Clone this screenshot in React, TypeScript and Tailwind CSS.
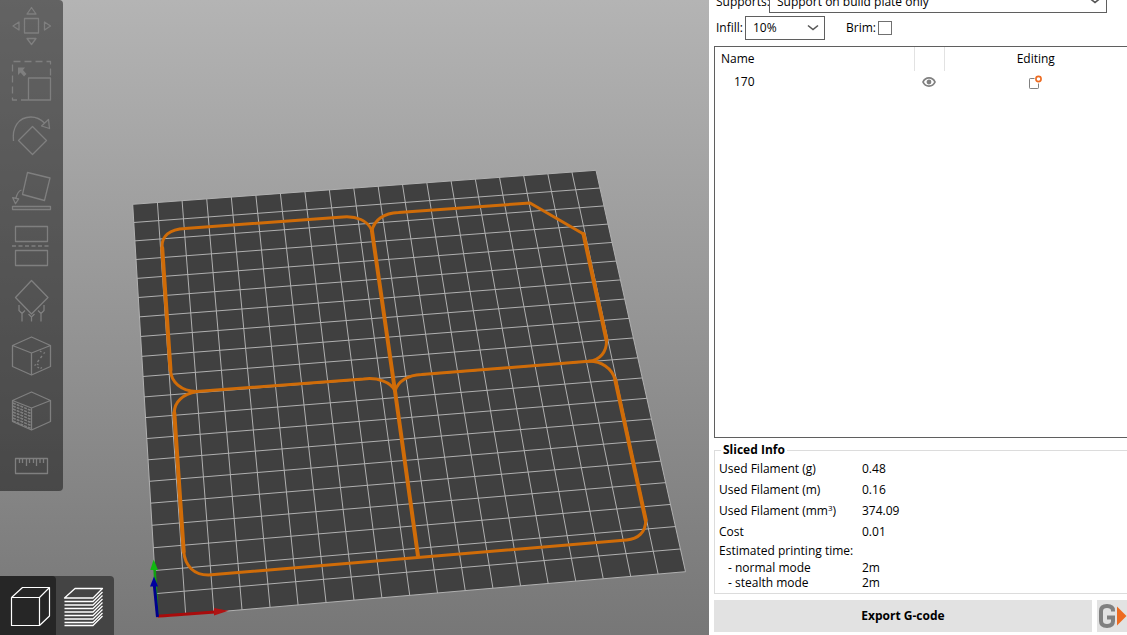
import React from 'react'

type Point = [number, number]

const COLUMNS = 19
const ROWS = 20

// bed corners: top left, top right, bottom right, bottom left
const BED: Point[] = [[132.7, 204.3], [596, 170.3], [685.5, 571.7], [157.5, 617]]

// perspective mapping of the unit square onto the bed
const project = (u: number, v: number): Point => {
  const [[x0, y0], [x1, y1], [x2, y2], [x3, y3]] = BED
  const dx3 = x0 - x1 + x2 - x3
  const dy3 = y0 - y1 + y2 - y3
  const det = (x1 - x2) * (y3 - y2) - (x3 - x2) * (y1 - y2)
  const g = (dx3 * (y3 - y2) - (x3 - x2) * dy3) / det
  const h = ((x1 - x2) * dy3 - dx3 * (y1 - y2)) / det
  const w = g * u + h * v + 1
  return [
    ((x1 - x0 + g * x1) * u + (x3 - x0 + h * x3) * v + x0) / w,
    ((y1 - y0 + g * y1) * u + (y3 - y0 + h * y3) * v + y0) / w,
  ]
}

const segment = (a: Point, b: Point) => `M${a[0]} ${a[1]}L${b[0]} ${b[1]}`

const gridPath = [
  ...Array.from({ length: COLUMNS + 1 }, (_, i) => segment(project(i / COLUMNS, 0), project(i / COLUMNS, 1))),
  ...Array.from({ length: ROWS + 1 }, (_, i) => segment(project(0, i / ROWS), project(1, i / ROWS))),
].join('')

const Scene = () => (
  <svg className="block h-full w-full" viewBox="0 0 709 635" preserveAspectRatio="xMinYMin meet" aria-label="Build plate">
    <polygon points={BED.map((p) => p.join(',')).join(' ')} fill="#404040" />
    <path d={gridPath} stroke="#b0b0b0" strokeWidth="1" fill="none" />

    {/* Printed outline */}
    <g fill="none" stroke="#d06c08" strokeLinecap="round" strokeLinejoin="round">
      <g strokeWidth="3">
        <path d="M162.2 248C161 236 170 229 185 228.5L343 217C356 216 368 220 372 231" />
        <path d="M372 231C374 220 384 213 398.5 212.5L530 203L583.5 234" />
        <path d="M170.5 370C171 382 181 391 196.5 391.5L363.5 379C377 377 391 382 395 391" />
        <path d="M395 391C398 381 408 375 421.5 374.5L588.5 361.3C600 360 607 352 606.5 340" />
        <path d="M196.5 391.5C183 394 174 402 174.3 413" />
        <path d="M588.5 361.3C601 361 612 368 615.3 380" />
        <path d="M183.7 551.7C185 566 194 575 208.3 575L626.7 540C638 539 646 532 645.7 520" />
      </g>
      <g strokeWidth="4">
        <path d="M162.2 248L170.5 370" />
        <path d="M372 231L395 391L418 556" />
        <path d="M583.5 234L606.5 340" />
        <path d="M174.3 413L183.7 551.7" />
        <path d="M615.3 380L645.7 520" />
      </g>
    </g>

    {/* Axes */}
    <path d="M157.5 616L154.5 568" stroke="#10a010" strokeWidth="2.5" />
    <path d="M153.7 559.5L150.3 570H158Z" fill="#10b810" />
    <path d="M157.5 616.2L215 612" stroke="#a80c0c" strokeWidth="3" />
    <path d="M214 608L228.500 610.8L214 615.5Z" fill="#b01414" />
    <path d="M157.5 617L154.3 585" stroke="#00008c" strokeWidth="3" />
    <path d="M154 576.500L150 586.5H158Z" fill="#0000a0" />
  </svg>
)

const CUBE = 'M31.5 7L50.5 15.5V36.5L31.5 45L12.5 36.5V15.5ZM12.5 15.5L31.5 23L50.5 15.5M31.5 23V45'

const tools = [
  {
    name: 'Move',
    icon: (
      <path d="M24.5 18.5h14v14.5h-14zM31.5 7.5L27 14h9zM31.5 44.5L27 38.5h9zM13 26l6-4v8zM50.5 26l-6-4v8z" />
    ),
  },
  {
    name: 'Scale',
    icon: (
      <>
        <path d="M28 45H12.5V6.5H50.5V23" strokeDasharray="7 4" />
        <path d="M28.5 23h22v22h-22z" />
        <path d="M18 12.5h7L23 15l3.5 4L24 21.5l-3.5-4L18 20z" fill="#7f7f7f" stroke="none" />
      </>
    ),
  },
  {
    name: 'Rotate',
    icon: (
      <path d="M32.5 16.5l14 14-14 14-14-14zM13.5 31C12 18 18 7 31 7C37 7 41 9.5 44.5 13M48.5 9.5l1 9-8-2.5z" />
    ),
  },
  {
    name: 'Place on face',
    icon: (
      <path d="M27.5 7.5L50 13L44.5 35.5L22.5 29.5zM12.5 41.5h38v3h-38zM21.5 25C18 26 17 29 16 33M12.7 32.7l6 1.3-3.2 4.7z" />
    ),
  },
  {
    name: 'Cut',
    icon: (
      <>
        <path d="M15.5 6.5h32v15h-32zM15.5 30.5h32v15h-32z" />
        <path d="M12 26H51" strokeDasharray="4 2.5" />
      </>
    ),
  },
  {
    name: 'Paint-on supports',
    icon: (
      <path d="M31.5 5.5L48 22.5L31.5 39L15.5 22.5zM19 30v5.5l3 3v8M22 38.5l3-3M28.5 39l3 3 3-3M31.5 42v4.5M44 30v5.5l-3 3v8M41 38.5l-3-3" />
    ),
  },
  {
    name: 'Seam painting',
    icon: (
      <>
        <path d={CUBE} />
        <path d="M40 21l1.500 1M43.500 23.500l1.500-1M42 26l-1.500 2M39 30l-1.500 2M34.500 35.500l1.500-1M37.500 37l1.500 1M40.500 38.500l1.500-1M37 34l1.500 1" />
      </>
    ),
  },
  {
    name: 'Multimaterial painting',
    icon: (
      <>
        <path d={CUBE} />
        <path
          d="M13 18l18 7.500M13 21l18 7.500M13 24l18 7.500M13 27l18 7.500M13 30l18 7.500M13 33l18 7.500M13 36l18 7.500"
          strokeDasharray="3 1"
          strokeWidth="1.600"
        />
      </>
    ),
  },
  {
    name: 'Measure',
    icon: (
      <path d="M15.5 18.500h32v15h-32zM19.500 19v4M22.500 19v4M26.500 19v7M29.500 19v4M33.500 19v4M36.500 19v7M40 19v4M43.500 19v4" />
    ),
  },
]

const Toolbar = () => (
  <div className="absolute top-0 left-0 flex w-[63px] flex-col overflow-hidden rounded-r bg-black/45">
    {tools.map((tool) => (
      <button key={tool.name} type="button" aria-label={tool.name} className="h-[55px] overflow-hidden last:h-[51px]">
        <svg className="block h-[55px] w-[63px]" viewBox="0 0 63 55" fill="none" stroke="#7f7f7f" strokeWidth="1.3" strokeLinejoin="round">
          {tool.icon}
        </svg>
      </button>
    ))}
  </div>
)

const layers = [25.5, 29, 32.5, 36, 39.5, 43, 46.5, 49.5]

const ViewSwitch = () => (
  <div className="absolute bottom-0 left-0 flex overflow-hidden rounded-tr bg-[#444444]">
    <button type="button" aria-label="3D editor view" className="rounded-tr bg-[#262626]">
      <svg className="block h-[59px] w-[56px]" viewBox="0 0 56 59" fill="none" stroke="#fff" strokeWidth="1.2" strokeLinejoin="round">
        <path d="M11.5 21.500h28v28h-28zM11.500 21.500L22.500 11.500H49.500L39.500 21.500M49.500 11.500V40L39.500 49.500" />
      </svg>
    </button>
    <button type="button" aria-label="Preview">
      <svg className="block h-[59px] w-[58px]" viewBox="0 0 58 59" fill="none" stroke="#fff" strokeWidth="1.3" strokeLinejoin="round">
        <path d="M8.500 22L19 12.500H46.500L37 22z" />
        {layers.map((y) => (
          <path key={y} d={`M8.5 ${y}H37l9.500 -9.500`} />
        ))}
      </svg>
    </button>
  </div>
)

const Chevron = () => (
  <svg className="pointer-events-none absolute top-2 right-1.5 h-2 w-3" viewBox="0 0 12 8" fill="none" stroke="#555" strokeWidth="1.6">
    <path d="M1 1.500L6 5.500l5-4" />
  </svg>
)

const PrintSettings = () => (
  <div className="-mt-[11px] flex flex-col gap-[3px] pl-0.5">
    <div className="flex items-center">
      <label htmlFor="supports" className="w-[53px] pt-0.5">Supports:</label>
      <div className="relative mr-5 flex-1">
        <select id="supports" className="block h-6 w-full appearance-none border border-[#5f5f5f] bg-white pt-0.5 pl-[7px]">
          <option>Support on build plate only</option>
        </select>
        <Chevron />
      </div>
    </div>
    <div className="flex items-center">
      <label htmlFor="infill" className="w-[29px]">Infill:</label>
      <div className="relative w-20">
        <select id="infill" className="block h-6 w-full appearance-none border border-[#5f5f5f] bg-white pl-[7px]">
          <option>10%</option>
        </select>
        <Chevron />
      </div>
      <label htmlFor="brim" className="ml-[21px] w-8">Brim:</label>
      <input id="brim" type="checkbox" className="h-3.5 w-3.5 appearance-none border border-[#707070] bg-white" />
    </div>
  </div>
)

const ObjectList = () => (
  <div className="mt-1.5 flex-1 border-y border-l border-[#5f5f5f]">
    <table className="w-full table-fixed border-collapse">
      <thead>
        <tr className="h-6">
          <th className="pl-1.5 text-left font-normal">Name</th>
          <th className="w-[30px] border-x border-[#e2e2e2]" aria-label="Visible"></th>
          <th className="w-[183px] font-normal">Editing</th>
        </tr>
      </thead>
      <tbody>
        <tr className="h-[22px]">
          <td className="pl-[19px]">170</td>
          <td>
            <button type="button" aria-label="Toggle visibility" className="ml-2 block">
              <svg className="block h-3 w-3.5" viewBox="0 0 14 12" fill="none" stroke="#808080" strokeWidth="1.8">
                <path d="M1 6C3.500 0.500 10.500 0.500 13 6C10.500 11.500 3.500 11.500 1 6Z" />
                <circle cx="7" cy="6" r="1.500" fill="#808080" />
              </svg>
            </button>
          </td>
          <td>
            <button type="button" aria-label="Edit object" className="mx-auto block">
              <svg className="block h-3.5 w-3.5" viewBox="0 0 14 14" fill="none">
                <path d="M5.500 3.500H1.200Q0.500 3.500 0.500 4.200V12.800Q0.500 13.500 1.200 13.500H8.800Q9.500 13.500 9.500 12.800V8.500" stroke="#808080" />
                <circle cx="9.500" cy="4" r="2.600" stroke="#ed6b21" strokeWidth="1.600" />
              </svg>
            </button>
          </td>
        </tr>
      </tbody>
    </table>
  </div>
)

const filament = [
  { label: 'Used Filament (g)', value: '0.48' },
  { label: 'Used Filament (m)', value: '0.16' },
  { label: <>Used Filament (mm<sup className="text-[8px]">3</sup>)</>, value: '374.09' },
  { label: 'Cost', value: '0.01' },
]

const times = [
  { label: '- normal mode', value: '2m' },
  { label: '- stealth mode', value: '2m' },
]

const SlicedInfo = () => (
  <fieldset className="mt-1 border-y border-l border-[#dcdcdc] pb-[3px] pl-1">
    <legend className="ml-0.5 px-0.5 leading-4 font-bold">Sliced Info</legend>
    <table className="w-full table-fixed border-collapse text-left">
      <tbody>
        {filament.map((row, i) => (
          <tr key={i} className="h-[21px]">
            <th className="w-[143px] font-normal">{row.label}</th>
            <td>{row.value}</td>
          </tr>
        ))}
        <tr className="h-[18px]">
          <th colSpan={2} className="font-normal">Estimated printing time:</th>
        </tr>
        {times.map((row) => (
          <tr key={row.label} className="h-[15px] leading-[15px]">
            <th className="pl-[9px] font-normal">{row.label}</th>
            <td>{row.value}</td>
          </tr>
        ))}
      </tbody>
    </table>
  </fieldset>
)

const Actions = () => (
  <div className="mt-1.5 mb-[3px] flex gap-[5px]">
    <button type="button" className="h-8 flex-1 bg-[#e2e2e2] font-bold">Export G-code</button>
    <button type="button" aria-label="Send G-code" className="h-8 w-[30px] bg-[#e2e2e2]">
      <svg className="block h-8 w-[30px]" viewBox="0 0 30 32">
        <path d="M16 11.500V10.500Q16 6 10 6Q4 6 4 11V21Q4 26 10 26Q16 26 16 21V17.500H10" fill="none" stroke="#808080" strokeWidth="4" />
        <path d="M20 6.500L29.500 16L20 25.500z" fill="#ed6b21" />
      </svg>
    </button>
  </div>
)

const App = () => {
  return (
    <div className="flex h-screen overflow-hidden bg-white font-['Open_Sans','Noto_Sans',sans-serif] text-[12px] leading-4 text-black">
      <main className="relative min-w-0 flex-1 bg-linear-to-b from-[#b4b4b4] to-[#777777]">
        <Scene />
        <Toolbar />
        <ViewSwitch />
      </main>
      <aside className="flex w-[418px] shrink-0 flex-col pl-[5px]">
        <PrintSettings />
        <ObjectList />
        <SlicedInfo />
        <Actions />
      </aside>
    </div>
  )
}

export default App
